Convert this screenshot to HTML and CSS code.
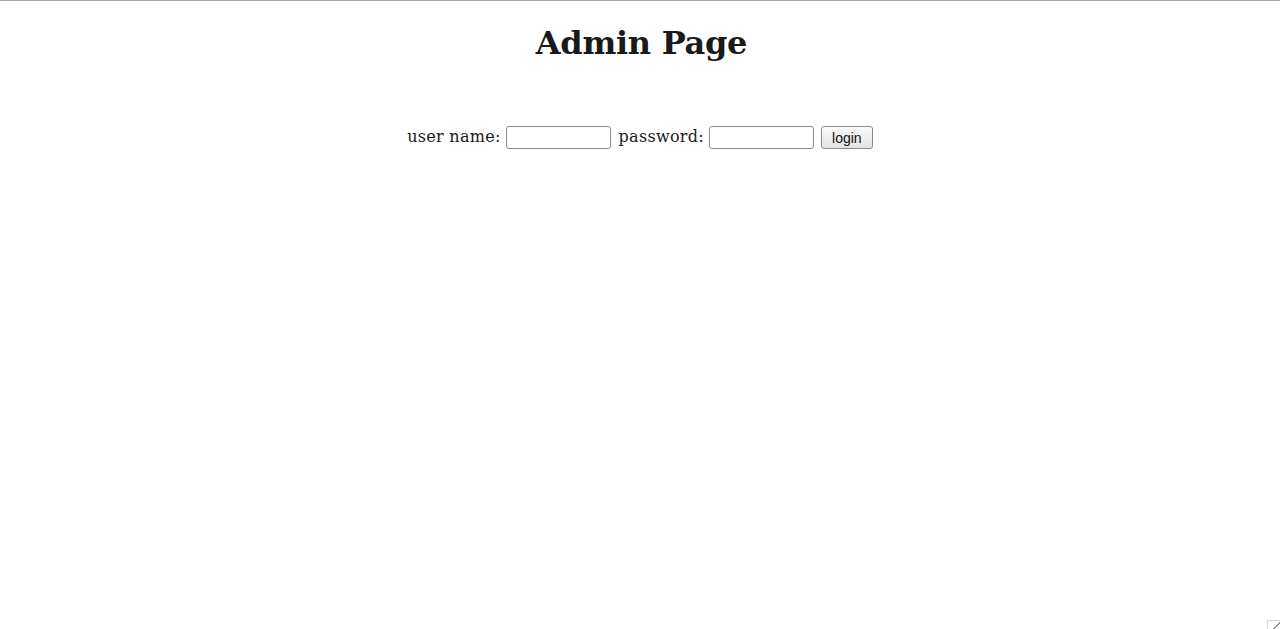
FILE: index.html
```html
<!DOCTYPE html>
<html>
<head>
<meta charset="utf-8">
<title>Admin Page</title>
<link rel="stylesheet" href="styles.css">
</head>
<body class="page">
<h1 class="title">Admin Page</h1>
<form class="login-form">
<label class="field-label">user name: <input class="field" type="text" name="user"></label>
<label class="field-label field-label-next">password: <input class="field" type="password" name="pass"></label>
<button class="login-btn" type="button">login</button>
</form>
<div class="corner-grip"></div>
</body>
</html>
```
FILE: styles.css
```css
html {
  border-top: 1px solid #a6a6a6;
  height: 100%;
  box-sizing: border-box;
}
.page {
  margin: 0;
  font-family: "DejaVu Serif", serif;
  color: #1a1a1a;
  background: #fff;
}
.title {
  text-align: center;
  font-size: 32px;
  font-weight: bold;
  letter-spacing: -0.3px;
  margin: 24px 0 0;
  padding-left: 3px;
  line-height: 37px;
}
.login-form {
  text-align: center;
  margin-top: 63px;
  font-size: 16px;
  letter-spacing: 0.3px;
  line-height: 23px;
}
.field-label-next {
  margin-left: 1px;
}
.field {
  box-sizing: border-box;
  width: 105px;
  height: 23px;
  margin: 0 1px 0 0;
  border: 1px solid #8a8a8a;
  border-radius: 3px;
  padding: 1px 3px;
  vertical-align: middle;
  font: 13px "Liberation Sans", sans-serif;
}
.login-btn {
  box-sizing: border-box;
  width: 52px;
  height: 23px;
  margin: 0;
  border: 1px solid #8a8a8a;
  border-radius: 3px;
  background: linear-gradient(#fafafa, #e2e2e2);
  font: 14px "Liberation Sans", sans-serif;
  letter-spacing: 0;
  color: #111;
  padding: 0;
  vertical-align: middle;
}
.corner-grip {
  position: fixed;
  left: 1267px;
  top: 620px;
  width: 13px;
  height: 9px;
  border-top: 1px solid #d8d8d8;
  border-left: 1px solid #d8d8d8;
  background: linear-gradient(135deg, transparent 55%, #9a9a9a 56%, #9a9a9a 64%, transparent 65%);
}
```
